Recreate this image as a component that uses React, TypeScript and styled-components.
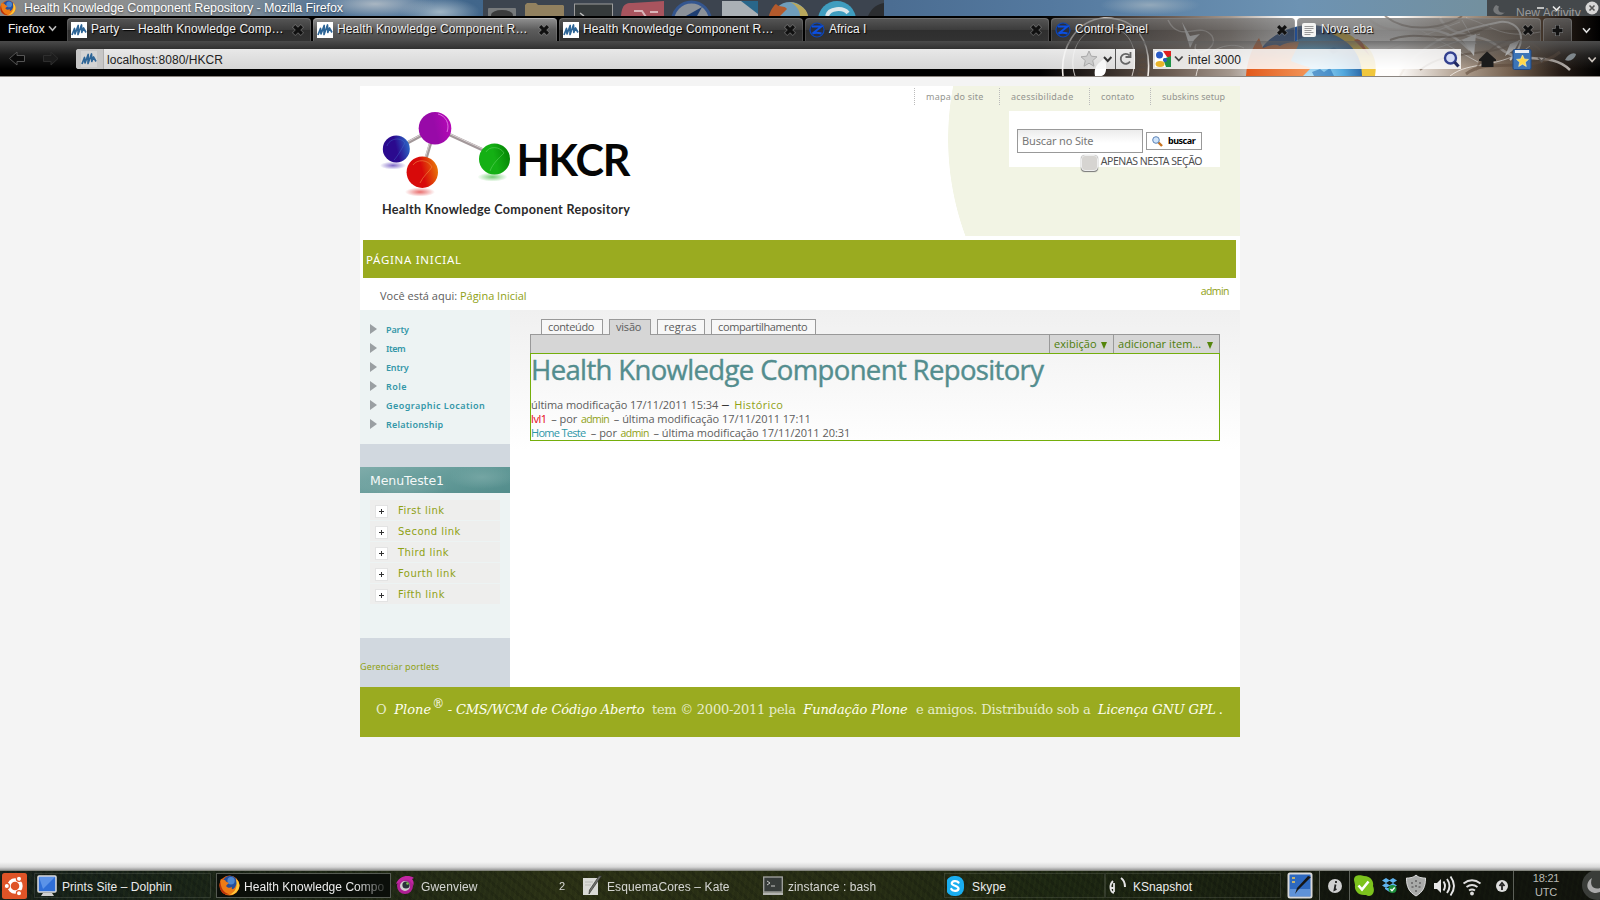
import React from "react";
import styled, { createGlobalStyle, css } from "styled-components";

const ui = css`font-family: "Liberation Sans", Arial, sans-serif;`;
const open = css`font-family: "Open Sans", sans-serif;`;
const noto = css`font-family: "Noto Sans", sans-serif;`;
const deja = css`font-family: "DejaVu Sans", sans-serif;`;
const serif = css`font-family: "DejaVu Serif", serif;`;

const Global = createGlobalStyle`
  * { box-sizing: border-box; }
  body { margin: 0; background: #f4f4f4; overflow: hidden; }
  svg { display: block; }
  a { text-decoration: none; color: inherit; }
`;

const Screen = styled.div`
  width: 1600px;
  height: 900px;
  display: flex;
  flex-direction: column;
  background: #f4f4f4;
`;

/* ---------- window title ---------- */
const TitleBar = styled.header`
  position: relative;
  height: 16px;
  display: flex;
  overflow: hidden;
  background:
    radial-gradient(ellipse 60px 14px at 375px 4px, #a9b6c2 0, transparent 100%),
    radial-gradient(ellipse 40px 14px at 440px 12px, #9fb4c4 0, transparent 100%),
    radial-gradient(ellipse 50px 10px at 1150px 5px, #93a9bb 0, transparent 100%),
    linear-gradient(90deg, #858788 0, #8d8f90 130px, #7f8c96 240px, #4e7296 340px, #55799d 400px, #41668b 470px, #4b6d92 890px, #54799f 1050px, #6d93b3 1300px, #73909f 1480px);
`;
const TitleText = styled.h1`
  ${ui}
  position: relative;
  margin: 0 0 0 8px;
  font-size: 12.5px;
  font-weight: 400;
  line-height: 16px;
  letter-spacing: -0.1px;
  color: #fff;
  text-shadow: 0 1px 2px #0008;
  white-space: nowrap;
`;
const TitleArt = styled.svg`
  position: absolute;
  left: 0;
  top: 0;
`;
const Activity = styled.div`
  ${ui}
  position: absolute;
  right: 0;
  top: 0;
  width: 113px;
  height: 16px;
  overflow: hidden;
  padding: 6px 0 0 29px;
  background: #44484b;
  font-size: 12px;
  line-height: 14px;
  color: #9a9a9a;
  white-space: nowrap;
`;
const WindowButtons = styled.svg`
  position: absolute;
  right: 0;
  top: 0;
`;

/* ---------- browser chrome ---------- */
const Chrome = styled.div`
  position: relative;
  height: 61px;
  background: #000;
  border-bottom: 1px solid #8b8580;
`;
const Persona = styled.svg`
  position: absolute;
  right: 0;
  top: 0;
`;
const TabStrip = styled.nav`
  ${ui}
  position: relative;
  display: flex;
  align-items: flex-end;
  gap: 2px;
  height: 25px;
  font-size: 12px;
  color: #f2f2f2;
`;
const FirefoxMenu = styled.div`
  width: 65px;
  height: 25px;
  padding-left: 8px;
  display: flex;
  align-items: center;
  gap: 3px;
`;
const Tab = styled.div<{ $active?: boolean }>`
  width: 244px;
  height: 23px;
  padding: 0 6px 1px 4px;
  display: flex;
  align-items: center;
  border-radius: 4px 4px 0 0;
  border-top: 1px solid ${p => (p.$active ? "#b5b5b5" : "rgba(150,150,150,.6)")};
  box-shadow: inset 1px 0 rgba(255, 255, 255, 0.12), inset -1px 0 rgba(255, 255, 255, 0.12);
  background: ${p =>
    p.$active
      ? "linear-gradient(#8d8d8d, #5c5c5c 50%, #4c4c4c)"
      : "linear-gradient(rgba(112,112,112,.75), rgba(86,86,86,.7) 48%, rgba(70,70,70,.66) 52%, rgba(78,78,78,.64))"};
`;
const TabLabel = styled.span<{ $ls?: number }>`
  flex: 1;
  margin-left: 4px;
  letter-spacing: ${p => p.$ls ?? 0}px;
  line-height: 21px;
  white-space: nowrap;
  text-shadow: 1px 1px 1px #000;
`;
const NewTab = styled.div`
  width: 29px;
  height: 23px;
  display: grid;
  place-items: center;
  border-radius: 4px 4px 0 0;
  border: 1px solid rgba(150, 150, 150, 0.4);
  border-bottom: 0;
  background: linear-gradient(rgba(112, 112, 112, 0.7), rgba(78, 78, 78, 0.5));
`;
const TabsMenu = styled.div`
  width: 24px;
  height: 25px;
  padding-top: 3px;
  display: grid;
  place-items: center;
`;
const NavBar = styled.div`
  ${ui}
  position: relative;
  height: 35px;
  padding: 8px 0 0 9px;
  display: flex;
  align-items: flex-start;
  font-size: 12px;
  line-height: 20px;
  color: #222;
  background: linear-gradient(rgba(88, 88, 88, 0.85), rgba(70, 70, 70, 0.4) 40%, rgba(0, 0, 0, 0) 80%);
`;
const Arrows = styled.svg`
  margin-right: 15px;
`;
const UrlField = styled.div`
  width: 1059px;
  height: 20px;
  display: flex;
  border-radius: 3px 0 0 3px;
  overflow: hidden;
  background: linear-gradient(rgba(255, 255, 255, 0.89), rgba(248, 248, 248, 0.86));
`;
const SiteBadge = styled.span`
  width: 28px;
  padding-right: 2px;
  display: grid;
  place-items: center;
  background: #c6c6c6;
  border-right: 1px solid #b0b0b0;
`;
const UrlText = styled.span<{ $ls: number }>`
  flex: 1;
  padding: 1px 0 0 3px;
  letter-spacing: ${p => p.$ls}px;
`;
const SearchField = styled.div`
  width: 308px;
  height: 20px;
  margin-left: 18px;
  display: flex;
  background: rgba(255, 255, 255, 0.84);
`;
const ToolIcons = styled.svg``;

/* ---------- page ---------- */
const Viewport = styled.main`
  height: 793px;
  padding-top: 9px;
  background: linear-gradient(transparent 785px, #d9d9d9 790px, #9b9b9b 793px), #f4f4f4;
`;
const Page = styled.div`
  width: 880px;
  margin: 0 auto;
  background: #fff;
`;
const Header = styled.div`
  height: 150px;
  display: flex;
  justify-content: space-between;
  background: radial-gradient(circle at 869px 53px, #f2f4e4 280.5px, #fff 281.2px);
`;
const Logo = styled.svg`
  margin: 14px 0 0 15px;
`;
const HeaderTools = styled.div`
  width: 326px;
  padding-top: 2px;
`;
const SiteActions = styled.div`
  ${noto}
  display: flex;
  font-size: 9px;
  line-height: 17px;
  color: #949590;
`;
const SiteAction = styled.a<{ $w: number; $ls: number }>`
  width: ${p => p.$w}px;
  padding-left: 11px;
  letter-spacing: ${p => p.$ls}px;
  border-left: 1px dotted #bbb;
  white-space: nowrap;
`;
const SearchBox = styled.form`
  width: 211px;
  height: 56px;
  margin: 6px 20px 0 auto;
  padding: 18px 18px 0 8px;
  background: #fff;
`;
const SearchRow = styled.div`
  display: flex;
  align-items: center;
  gap: 3px;
`;
const SearchInput = styled.div`
  ${noto}
  width: 126px;
  height: 24px;
  flex: none;
  padding-left: 4px;
  border: 1px solid #999;
  background: linear-gradient(#ececec, #fff 60%);
  font-size: 11px;
  line-height: 22px;
  letter-spacing: -0.15px;
  color: #777;
`;
const SearchButton = styled.div`
  ${noto}
  width: 56px;
  height: 18px;
  flex: none;
  padding-left: 5px;
  display: flex;
  align-items: center;
  gap: 5px;
  border: 1px solid #999;
  font-size: 9px;
  font-weight: 700;
  line-height: 16px;
  letter-spacing: -0.48px;
  color: #000;
`;
const OnlyHere = styled.label`
  ${noto}
  display: flex;
  justify-content: flex-end;
  gap: 3px;
  font-size: 10.5px;
  line-height: 17px;
  letter-spacing: -0.44px;
  color: #505050;
  white-space: nowrap;
`;
const Check = styled.span`
  width: 17px;
  height: 16px;
  margin-top: 2px;
  border-radius: 4px;
  border: 1px solid #eee;
  background: #d6d4d1;
  box-shadow: 0 1px 1px #777, 0 0 1px #999;
`;
const MainNav = styled.nav`
  ${noto}
  height: 38px;
  margin: 4px 4px 0 3px;
  padding-left: 3px;
  background: #9aab20;
  color: #fff;
  font-size: 11.5px;
  line-height: 39px;
  letter-spacing: 0.7px;
`;
const Crumbs = styled.div`
  ${open}
  height: 32px;
  padding: 0 11px 0 20px;
  display: flex;
  font-size: 11px;
  line-height: 14px;
  color: #5c5c5c;
`;
const CrumbText = styled.span`
  flex: 1;
  padding-top: 11px;
`;
const Green = styled.a<{ $ls?: number; $ml?: number }>`
  color: #8fa114;
  letter-spacing: ${p => p.$ls ?? 0}px;
  margin-left: ${p => p.$ml ?? 0}px;
`;
const UserLink = styled(Green)`
  font-size: 10.5px;
  letter-spacing: -0.55px;
`;
const UserName = styled.span`
  padding-top: 6px;
`;
const Body = styled.div`
  display: flex;
  height: 377px;
`;
const Sidebar = styled.aside`
  width: 150px;
  background: #d1d8df;
`;
const NavPortlet = styled.ul`
  ${noto}
  height: 134px;
  margin: 0 0 23px;
  padding: 10px 0 0 10px;
  list-style: none;
  background: #edf3f3;
  font-size: 9px;
  font-weight: 650;
  line-height: 19px;
  color: #3497a8;
`;
const NavItem = styled.li<{ $ls: number }>`
  display: flex;
  align-items: center;
  gap: 9px;
  height: 19px;
  letter-spacing: ${p => p.$ls}px;
  &::before {
    content: "";
    border: solid transparent;
    border-width: 5.5px 0 5.5px 7.5px;
    border-left-color: #9a9fa2;
    margin-top: -1px;
  }
`;
const MenuTitle = styled.h2`
  ${deja}
  height: 26px;
  margin: 0;
  padding: 1px 0 0 10px;
  background:
    radial-gradient(ellipse 34px 12px at 122px 10px, #74a5a3 0, transparent 100%),
    radial-gradient(ellipse 50px 10px at 40px 20px, #7aa8a6 0, transparent 100%),
    linear-gradient(165deg, #7facaa, #649b99 50%, #528c8b);
  font-size: 12.5px;
  font-weight: 400;
  line-height: 25px;
  letter-spacing: -0.06px;
  color: #f4f8f8;
`;
const MenuBox = styled.div`
  height: 145px;
  padding: 7px 10px 0;
  background: #edf3f3;
`;
const MenuLink = styled.a`
  ${deja}
  display: flex;
  align-items: center;
  height: 20px;
  margin-bottom: 1px;
  padding: 1px 0 0 5px;
  gap: 10px;
  background: #eeeeed;
  font-size: 10px;
  letter-spacing: 0.46px;
  color: #8fa114;
`;
const Plus = styled.span`
  width: 13px;
  height: 13px;
  margin-top: 2px;
  display: grid;
  place-items: center;
  background: #fff;
  border: 1px solid #e3e3e3;
`;
const Manage = styled.a`
  ${noto}
  display: block;
  padding-top: 22px;
  font-size: 9px;
  line-height: 14px;
  letter-spacing: 0.15px;
  color: #8fa114;
`;
const Content = styled.section`
  ${open}
  flex: 1;
  padding: 9px 20px 0;
  background: linear-gradient(#f0f0f0, #fff 140px);
  font-size: 11px;
  color: #5c5c5c;
`;
const ViewTabs = styled.div`
  display: flex;
  gap: 6px;
  height: 15px;
  padding-left: 11px;
`;
const ViewTab = styled.a<{ $w: number; $ls: number; $active?: boolean }>`
  position: relative;
  width: ${p => p.$w}px;
  height: ${p => (p.$active ? 16 : 15)}px;
  padding-left: 6px;
  border: 1px solid #999;
  border-bottom: 0;
  background: ${p => (p.$active ? "#d6d6d6" : "#f7f7f7")};
  line-height: 14px;
  letter-spacing: ${p => p.$ls}px;
`;
const ActionBar = styled.div`
  height: 19px;
  display: flex;
  justify-content: flex-end;
  border: 1px solid #999;
  border-bottom: 0;
  background: #d6d6d6;
`;
const ActionMenu = styled.div<{ $w: number }>`
  width: ${p => p.$w}px;
  display: flex;
  justify-content: space-between;
  align-items: center;
  padding: 0 6px 0 4px;
  border-left: 1px solid #999;
  line-height: 18px;
  letter-spacing: 0.06px;
  color: #4d7d08;
  &::after {
    content: "";
    border: solid transparent;
    border-width: 7px 3.5px 0;
    border-top-color: #55850c;
    margin-top: 2px;
  }
`;
const Editable = styled.div`
  height: 88px;
  border: 1px solid #74ae0b;
`;
const Title = styled.h1`
  margin: 0 0 13px;
  padding-top: 1px;
  font-size: 27.5px;
  font-weight: 400;
  -webkit-text-stroke: 0.4px #538d8e;
  line-height: 30px;
  letter-spacing: -0.64px;
  color: #538d8e;
  white-space: nowrap;
`;
const Meta = styled.div`
  display: flex;
  height: 14px;
  line-height: 14px;
  white-space: nowrap;
`;
const Seg = styled.span<{ $ls?: number; $ml?: number; $c?: string }>`
  letter-spacing: ${p => p.$ls ?? -0.03}px;
  margin-left: ${p => p.$ml ?? 0}px;
  color: ${p => p.$c ?? "inherit"};
`;
const Dash = styled.span`
  font-family: Lato, sans-serif;
  font-size: 10.5px;
  width: 9px;
  margin: 0 4px 0 3px;
  color: #000;
`;
const Footer = styled.footer`
  ${serif}
  height: 50px;
  padding: 9px 0 0 16px;
  display: flex;
  background: #9aab20;
  font-size: 13px;
  line-height: 28px;
  color: #e6ebcb;
  white-space: nowrap;
`;
const Strong = styled.em<{ $ls: number; $ml: number }>`
  color: #fffff2;
  letter-spacing: ${p => p.$ls}px;
  margin-left: ${p => p.$ml}px;
`;
const Sup = styled.sup`
  width: 11px;
  font-size: 12px;
  line-height: 17px;
  margin-left: 1px;
  color: #f6f8e6;
`;

/* ---------- desktop panel ---------- */
const Panel = styled.footer`
  ${ui}
  position: relative;
  height: 30px;
  display: flex;
  align-items: flex-start;
  padding-top: 3px;
  border-top: 1px solid #84867f;
  background:
    repeating-linear-gradient(100deg, rgba(90, 100, 40, 0.07) 0 2px, transparent 2px 5px),
    repeating-linear-gradient(40deg, rgba(0, 0, 0, 0.12) 0 3px, transparent 3px 8px),
    linear-gradient(90deg, #15201a 0, #1b2516 300px, #2a3015 560px, #262c14 850px, #1c2612 1050px, #171d10 1300px, #14180e 1600px);
  color: #ececec;
  font-size: 12px;
`;
const Ubuntu = styled.svg`
  margin: -1px 7px 0 2px;
`;
const Task = styled.div<{ $w: number; $state?: "framed" | "active" | "plain" }>`
  width: ${p => p.$w}px;
  height: 25px;
  margin-top: -1px;
  padding-left: 2px;
  display: flex;
  align-items: center;
  border: 1px solid ${p => (p.$state === "active" ? "#555a52" : p.$state === "framed" ? "#ffffff1c" : "transparent")};
  background: ${p => (p.$state === "active" ? "#0b0f0a" : "transparent")};
  opacity: ${p => (p.$state === "plain" ? 0.88 : 1)};
`;
const TaskLabel = styled.span<{ $ls: number; $fade?: boolean }>`
  flex: 1;
  margin-left: 5px;
  padding-top: 2px;
  letter-spacing: ${p => p.$ls}px;
  line-height: 20px;
  white-space: nowrap;
  ${p => p.$fade && css`
    margin-left: 4px;
    mask-image: linear-gradient(90deg, #000 112px, transparent 146px);
  `}
`;
const Count = styled.span`
  margin-right: 13px;
  font-size: 11px;
`;
const Gap = styled.span<{ $w: number }>`
  width: ${p => p.$w}px;
`;
const Tray = styled.svg`
  position: absolute;
  right: 0;
  top: 0;
`;
const Clock = styled.div`
  position: absolute;
  right: 38px;
  top: 0;
  width: 32px;
  font-size: 11px;
  line-height: 14px;
  text-align: center;
  color: #b9bab5;
  letter-spacing: -0.2px;
`;

/* ---------- icons ---------- */
const Wave = ({ bg = "#fff" }: { bg?: string }) => (
  <svg width="16" height="16" viewBox="0 0 16 16">
    <rect width="16" height="16" fill={bg} />
    <path d="M1 13 L3.500 6.500 L4 12 L7.200 3.500 L7 12.500 L10.500 3 L10.800 10.500 L12.500 6 L15 10.500" fill="none" stroke="#2d6597" strokeWidth="1.700" strokeLinejoin="round" />
  </svg>
);
const Zed = () => (
  <svg width="16" height="16" viewBox="0 0 16 16">
    <circle cx="8" cy="8" r="7" fill="#2a2f3d" stroke="#0c46b8" strokeWidth="1.200" />
    <path d="M3 4.500 H12.500 L3.500 11.500 C6 10.500 9 10.500 12.500 11.500" fill="none" stroke="#0b4fe0" strokeWidth="1.900" />
  </svg>
);
const Doc = () => (
  <svg width="16" height="16" viewBox="0 0 16 16">
    <rect x="1" y="1" width="14" height="14" rx="2" fill="#f4f4f2" />
    <path d="M3.500 4.500h9M3.500 6.500h9M3.500 8.500h7M3.500 10.500h9M3.500 12.500h6" stroke="#999" />
  </svg>
);
const Close = () => (
  <svg width="14" height="14" viewBox="0 0 14 14">
    <path d="M4.300 4.300 L9.700 9.700 M9.700 4.300 L4.300 9.700" stroke="#8a8a8a" strokeWidth="4.800" strokeLinecap="square" opacity=".5" />
    <path d="M4.300 4.300 L9.700 9.700 M9.700 4.300 L4.300 9.700" stroke="#101010" strokeWidth="3.200" strokeLinecap="square" />
  </svg>
);
const Chevron = ({ c = "#ddd" }: { c?: string }) => (
  <svg width="9" height="7" viewBox="0 0 9 7">
    <path d="M1 1.200 L4.500 5.200 L8 1.200" fill="none" stroke={c} strokeWidth="1.600" />
  </svg>
);
const Fox = ({ size = 20 }: { size?: number }) => (
  <svg width={size} height={size} viewBox="0 0 20 20">
    <circle cx="10" cy="10" r="9.500" fill="#e0600f" />
    <circle cx="10.500" cy="7.500" r="6.800" fill="#274f9c" />
    <circle cx="11.500" cy="5.500" r="3.500" fill="#4c86d0" />
    <path d="M2 3.500 C3 5 4.500 4.500 6 5 C6 6.500 8.500 7 9.500 7.500 C8.500 9 6.500 9 7 11 C9 13 11 12 12.500 11.500 C11 15 14.500 14 16 10 C18 8 17 5 16 3.500 C20.500 7 20.500 13 16 17 C12 20 6 20 3 16 C0 12 .5 6 2 3.500Z" fill="#ee7b16" />
    <path d="M16 3.500 C20.500 7 20.500 13 16 17 C14 18.500 12 19 10 19 C16 16 18 11 16 3.500Z" fill="#ffc83a" />
    <path d="M1.500 5.500 C1 11 4 17 10 18.500 C5 19.500 0 16 .5 9Z" fill="#b8320a" />
  </svg>
);
const DesktopArt = () => (
  <TitleArt width="900" height="16" viewBox="0 0 900 16">
    <rect x="483" width="401" height="16" fill="#3c444f" />
    <rect x="488" y="8" width="28" height="10" rx="1" fill="#777a7c" />
    <ellipse cx="502" cy="15" rx="11" ry="5" fill="#3a3b3c" />
    <path d="M525 16V5l2-2h9l2 2h25l1 1v10z" fill="#92815f" />
    <rect x="574.500" y="4" width="38" height="14" fill="#353a3b" stroke="#9c9c9c" />
    <path d="M580 13 l4 3" stroke="#bbb" strokeWidth="1.500" />
    <path d="M621 16 C622 4 626 3 632 3 L664 1 V16Z" fill="#a8545e" />
    <path d="M634 11 h8 l4 6 M650 12 h8" stroke="#d9b4b8" strokeWidth="2" fill="none" />
    <circle cx="691.500" cy="21" r="19" fill="#8b9199" stroke="#34568f" strokeWidth="3" />
    <path d="M686 16 L702 7 L697 16Z" fill="#1f3f73" />
    <path d="M722 16V1h24l12 12v3z" fill="#aab0b5" /><path d="M741 1h17v13z" fill="#29668a" />
    <circle cx="790" cy="20" r="18" fill="#6f9dbb" />
    <path d="M790 2 C803 4 808 12 808 16 H800 C800 10 796 5 790 2Z" fill="#b9a85c" />
    <path d="M769 16 C770 11 774 5 776 4 C780 8 784 5 787 9 L780 16Z" fill="#b45a2c" />
    <circle cx="837" cy="20" r="19" fill="#3f9dbf" /><path d="M827 16 C829 8 843 7 848 13" stroke="#dbe6ea" strokeWidth="4" fill="none" />
    <path d="M868 16 C872 7 878 4 884 3 V16Z" fill="#2b2d30" />
  </TitleArt>
);
const PersonaArt = () => (
  <Persona width="560" height="60" viewBox="1040 16 560 60">
    <defs>
      <linearGradient id="base" x1="0" x2="1">
        <stop offset="0" stopColor="#000" /><stop offset=".1" stopColor="#2c2521" />
        <stop offset=".24" stopColor="#6f6056" /><stop offset=".34" stopColor="#a5988e" />
        <stop offset=".44" stopColor="#fff" /><stop offset=".64" stopColor="#fffdfb" />
        <stop offset=".74" stopColor="#b7a798" /><stop offset=".84" stopColor="#75614f" />
        <stop offset=".93" stopColor="#241b15" /><stop offset="1" stopColor="#000" />
      </linearGradient>
      <radialGradient id="globe" cx=".5" cy=".45"><stop offset="0" stopColor="#bfe8fb" /><stop offset=".55" stopColor="#53a9de" /><stop offset="1" stopColor="#1b4a8c" /></radialGradient>
      <linearGradient id="foxfur" x1="0" x2="1"><stop offset="0" stopColor="#e2591b" /><stop offset="1" stopColor="#f2975a" /></linearGradient>
    </defs>
    <rect x="1040" y="16" width="560" height="60" fill="url(#base)" />
    <g fill="none" stroke="#f3eee9">
      <path d="M1063 76 C1060 50 1075 20 1104 18 C1135 17 1152 40 1148 76" strokeWidth="1.600" />
      <path d="M1075 76 C1068 55 1078 30 1102 27 C1130 25 1140 50 1132 76" strokeWidth="1" opacity=".8" />
      <path d="M1168 20 C1180 45 1200 20 1212 36 C1220 50 1190 60 1196 44" strokeWidth="1.400" opacity=".7" />
      <path d="M1196 76 C1200 50 1230 40 1244 48" opacity=".8" />
      <path d="M1370 20 C1400 45 1430 10 1470 50" strokeWidth="2.500" />
      <path d="M1400 76 C1420 40 1460 30 1500 22 C1520 20 1530 40 1510 60" strokeWidth="2" />
      <path d="M1440 18 C1450 40 1480 30 1500 48 C1520 66 1550 50 1570 70" strokeWidth="2.500" opacity=".7" />
      <path d="M1466 18 C1490 24 1500 40 1540 32" opacity=".6" />
      <path d="M1385 50 L1460 22 M1400 60 L1480 34 M1420 30 L1478 62 M1450 76 C1470 60 1500 70 1530 46 M1462 20 L1476 44" opacity=".8" />
    </g>
    <g fill="none" stroke="#5d4838" opacity=".55" strokeWidth="2">
      <path d="M1385 16 C1410 36 1450 26 1462 16" /><path d="M1420 70 C1450 46 1490 60 1520 40" />
      <path d="M1390 40 C1420 28 1446 48 1490 26 M1476 70 C1490 40 1520 30 1540 50" />
      <path d="M1466 74 C1490 56 1530 76 1560 52" strokeWidth="3" /><path d="M1140 76 C1148 60 1134 50 1144 42" strokeWidth="6" strokeDasharray="3 2" />
    </g>
    <path d="M1095 76 C1093 66 1100 62 1105 58 C1107 68 1107 76 1100 76Z M1182 22 l8 14 l10 -2 l-6 6 l-4 8 l-3-10Z M1462 40 l12 16 l2-22Z M1505 56 l5-12 l10-4 l-5 9Z" fill="#fff" />
    <circle cx="1310" cy="87" r="62" fill="url(#globe)" />
    <path d="M1262 48 C1280 22 1330 18 1352 40 C1330 30 1300 34 1290 46Z" fill="#224c8e" />
    <path d="M1246 76 C1247 60 1253 46 1259 38 L1263 48 C1272 44 1276 44 1280 46 C1286 42 1294 42 1299 42 C1297 50 1292 56 1291 61 C1298 64 1306 66 1311 68 L1303 76Z" fill="url(#foxfur)" />
    <path d="M1332 34 C1352 42 1362 56 1362 76 H1375 C1378 62 1373 46 1356 40 C1352 34 1340 30 1332 34Z" fill="#f0c63c" />
    <path d="M1354 40 C1358 38 1362 41 1364 46 L1370 56Z" fill="#cd4e1c" />
    <path d="M1312 72 l8-3 4 3 6-4 4 8h-20z M1328 50 l6-3 5 4 -6 3z" fill="#2a6fb4" opacity=".6" />
  </Persona>
);
const LogoArt = () => (
  <Logo width="265" height="125" viewBox="375 100 265 125">
    <defs>
      {[["p", "#980aa8", "#b808b8"], ["b", "#2b0a8e", "#2c6ac8"], ["r", "#d80a0a", "#ea7a08"], ["g", "#14b014", "#048504"]].map(([id, a, b]) => (
        <linearGradient key={id} id={"ball" + id} x1="0" y1=".6" x2="1" y2=".35">
          <stop offset="0" stopColor={a} /><stop offset=".5" stopColor={a} /><stop offset="1" stopColor={b} />
        </linearGradient>
      ))}
      {[["b", "#4a2ab0"], ["r", "#e03030"], ["g", "#3cb83c"]].map(([id, c]) => (
        <radialGradient key={id} id={"shade" + id}><stop offset="0" stopColor={c} stopOpacity=".7" /><stop offset="1" stopColor={c} stopOpacity="0" /></radialGradient>
      ))}
    </defs>
    <g stroke="#a2989a" strokeWidth="3.200"><path d="M435 128 L396 149 M435 128 L422 172 M435 128 L494 155" /></g>
    <g stroke="#d9d2d3" strokeWidth="1"><path d="M435 127 L396 148 M434 128 L421 172 M435 127 L494 154" /></g>
    <ellipse cx="393" cy="165.500" rx="13" ry="4" fill="url(#shadeb)" />
    <ellipse cx="420" cy="192" rx="15" ry="4.500" fill="url(#shader)" />
    <ellipse cx="492.500" cy="177" rx="15" ry="4.500" fill="url(#shadeg)" />
    <circle cx="396.300" cy="149" r="13.500" fill="url(#ballb)" />
    <circle cx="435" cy="128.300" r="16.300" fill="url(#ballp)" />
    <circle cx="422.300" cy="172.200" r="15.700" fill="url(#ballr)" />
    <circle cx="494.500" cy="159" r="15.500" fill="url(#ballg)" />
    <path d="M387 146 C389 139 400 136 405 143 C401 150 397 157 394 160" fill="none" stroke="#4470d0" opacity=".4" />
    <path d="M438 114 C446 116 450 124 447 132" fill="none" stroke="#e58ae8" opacity=".8" />
    <path d="M413 165 C417 159 428 159 432 167 C429 172 423 176 420 183" fill="none" stroke="#f5a050" opacity=".5" />
    <path d="M486 152 C489 146 500 146 504 153 C499 158 493 163 490 171" fill="none" stroke="#7fe07f" opacity=".4" />
    <text x="516.500" y="175.700" fontFamily="Lato, sans-serif" fontWeight="700" fontSize="43" textLength="114" fill="#050505">HKCR</text>
    <text x="382" y="213.500" fontFamily="Lato, sans-serif" fontWeight="700" fontSize="12.600" textLength="248" fill="#2a2a2a">Health Knowledge Component Repository</text>
  </Logo>
);

const tabs = [
  { icon: <Wave />, label: "Party — Health Knowledge Comp…", ls: 0.04 },
  { icon: <Wave />, label: "Health Knowledge Component R…", ls: 0.13, active: true },
  { icon: <Wave />, label: "Health Knowledge Component R…", ls: 0.13 },
  { icon: <Zed />, label: "Africa I", ls: 0 },
  { icon: <Zed />, label: "Control Panel", ls: 0.02 },
  { icon: <Doc />, label: "Nova aba", ls: 0.09 },
];
const navItems: [string, number][] = [["Party", -0.1], ["Item", -0.4], ["Entry", -0.15], ["Role", 0.45], ["Geographic Location", 0.46], ["Relationship", 0.22]];

export default function App() {
  return (
    <Screen>
      <Global />
      <TitleBar>
        <DesktopArt />
        <Fox size={16} />
        <TitleText>Health Knowledge Component Repository - Mozilla Firefox</TitleText>
        <Activity>New Activity</Activity>
        <WindowButtons width="113" height="16" viewBox="1487 0 113 16">
          <path d="M1496 5 c-6 5 -1 11 6 9.500 l3-2 c-5 1 -8 -2 -6-6" fill="#77797b" />
          <path d="M1537 8h7M1553 6.500l3.500 3.500 3.500-3.500" stroke="#e8e8e8" strokeWidth="1.600" fill="none" />
          <circle cx="1592" cy="8" r="6.500" fill="#d6d6d6" /><path d="M1589.500 5.500l5 5m0-5l-5 5" stroke="#555" strokeWidth="1.600" />
        </WindowButtons>
      </TitleBar>

      <Chrome>
        <PersonaArt />
        <TabStrip>
          <FirefoxMenu>Firefox <Chevron c="#bbb" /></FirefoxMenu>
          {tabs.map((t, i) => (
            <Tab key={i} $active={t.active}>
              {t.icon}
              <TabLabel $ls={t.ls}>{t.label}</TabLabel>
              <Close />
            </Tab>
          ))}
          <NewTab>
            <svg width="13" height="13" viewBox="0 0 13 13"><path d="M6.500 1v11M1 6.500h11" stroke="#777" strokeWidth="5" /><path d="M6.500 1.500v10M1.500 6.500h10" stroke="#111" strokeWidth="3.500" /></svg>
          </NewTab>
          <TabsMenu><Chevron /></TabsMenu>
        </TabStrip>
        <NavBar>
          <Arrows width="52" height="20" viewBox="9 49 52 20">
            <path d="M9.500 58.500 L17 52 V55.500 H24.500 V61.500 H17 V65Z" fill="#0a0a0a" stroke="#555" />
            <path d="M58 58.500 L51 52 V55.500 H43.500 V61.500 H51 V65Z" fill="#1c1c1c" stroke="#2e2e2e" />
          </Arrows>
          <UrlField>
            <SiteBadge><Wave bg="#d4d4d4" /></SiteBadge>
            <UrlText $ls={0.07}>localhost:8080/HKCR</UrlText>
            <svg width="57" height="20" viewBox="1078 49 57 20">
              <path d="M1089 51l2.300 5.200 5.700.6-4.300 3.800 1.300 5.600-5-3-5 3 1.300-5.600-4.300-3.800 5.700-.6z" fill="#ccc" stroke="#aaa" />
              <path d="M1104 57l3.700 4 3.700-4" fill="none" stroke="#333" strokeWidth="2" />
              <path d="M1115.500 49v20" stroke="#555" />
              <path d="M1129.500 55.500a5 5 0 1 0 .5 6M1130.500 52v5h-5" fill="none" stroke="#666" strokeWidth="1.800" />
            </svg>
          </UrlField>
          <SearchField>
            <svg width="32" height="20" viewBox="1153 49 32 20">
              <rect x="1155" y="51" width="16" height="16" fill="#fff" />
              <path d="M1163 51h8v7l-4-1z" fill="#d22" /><path d="M1163 59l8-3v11h-5z" fill="#1f9147" />
              <circle cx="1159.500" cy="55" r="3.500" fill="#2a5bc7" /><ellipse cx="1160" cy="64" rx="4.500" ry="3" fill="#e9b42a" />
              <circle cx="1165" cy="60" r="2" fill="#2a5bc7" />
              <path d="M1175 56.500l3.800 4 3.800-4" fill="none" stroke="#444" strokeWidth="1.800" />
            </svg>
            <UrlText $ls={0.11}>intel 3000</UrlText>
            <svg width="20" height="20" viewBox="1441 49 20 20">
              <circle cx="1450.500" cy="58" r="5.500" fill="#d5dcf5" stroke="#33408f" strokeWidth="2.400" /><path d="M1454.500 62l4 4.500" stroke="#222a60" strokeWidth="3.200" />
            </svg>
          </SearchField>
          <ToolIcons width="139" height="24" viewBox="1461 49 139 24">
            <path d="M1479 59.500 L1487 51.500 L1496 59.500 V61 H1493.500 V67 H1481.500 V61 H1479Z" fill="#1b1b1b" />
            <rect x="1513" y="49.500" width="18" height="20" rx="1.500" fill="#3c75b8" stroke="#1f4680" /><rect x="1515" y="50" width="14" height="3" fill="#e8eef5" />
            <path d="M1522.500 55l1.800 4 4.200.4-3.200 2.800 1 4.300-3.800-2.300-3.800 2.300 1-4.300-3.200-2.800 4.200-.4z" fill="#ffd84a" stroke="#fff3b0" strokeWidth=".6" />
            <path d="M1538 57.500l3.600 4 3.600-4" fill="none" stroke="#5a5450" strokeWidth="1.700" />
            <path d="M1588.500 57.500l3.600 4 3.600-4" fill="none" stroke="#c9c2bc" strokeWidth="1.700" />
            <path d="M1565 60 C1568 54 1573 52 1576 54 C1575 59 1570 62 1565 60Z" fill="#7e868b" />
          </ToolIcons>
        </NavBar>
      </Chrome>

      <Viewport>
        <Page>
          <Header>
            <LogoArt />
            <HeaderTools>
              <SiteActions>
                <SiteAction $w={85} $ls={0.25}>mapa do site</SiteAction>
                <SiteAction $w={90} $ls={0.24}>acessibilidade</SiteAction>
                <SiteAction $w={61} $ls={0.15}>contato</SiteAction>
                <SiteAction $w={90} $ls={0.02}>subskins setup</SiteAction>
              </SiteActions>
              <SearchBox>
                <SearchRow>
                  <SearchInput>Buscar no Site</SearchInput>
                  <SearchButton>
                    <svg width="11" height="11" viewBox="0 0 11 11"><path d="M6 6l4 4" stroke="#c8721e" strokeWidth="2.400" /><circle cx="4" cy="4" r="3.300" fill="#cfe4fb" stroke="#5b82b5" /></svg>
                    buscar
                  </SearchButton>
                </SearchRow>
                <OnlyHere><Check />APENAS NESTA SEÇÃO</OnlyHere>
              </SearchBox>
            </HeaderTools>
          </Header>
          <MainNav>PÁGINA INICIAL</MainNav>
          <Crumbs>
            <CrumbText>Você está aqui: <Green>Página Inicial</Green></CrumbText>
            <UserName><UserLink>admin</UserLink></UserName>
          </Crumbs>
          <Body>
            <Sidebar>
              <NavPortlet>
                {navItems.map(([t, ls]) => <NavItem key={t} $ls={ls}>{t}</NavItem>)}
              </NavPortlet>
              <MenuTitle>MenuTeste1</MenuTitle>
              <MenuBox>
                {["First", "Second", "Third", "Fourth", "Fifth"].map(n => (
                  <MenuLink key={n}>
                    <Plus><svg width="5" height="5"><path d="M2.500 0v5M0 2.500h5" stroke="#333" /></svg></Plus>
                    {n} link
                  </MenuLink>
                ))}
              </MenuBox>
              <Manage>Gerenciar portlets</Manage>
            </Sidebar>
            <Content>
              <ViewTabs>
                <ViewTab $w={62} $ls={-0.34}>conteúdo</ViewTab>
                <ViewTab $w={42} $ls={-0.2} $active>visão</ViewTab>
                <ViewTab $w={48} $ls={0}>regras</ViewTab>
                <ViewTab $w={105} $ls={-0.38}>compartilhamento</ViewTab>
              </ViewTabs>
              <ActionBar>
                <ActionMenu $w={64}>exibição</ActionMenu>
                <ActionMenu $w={106}>adicionar item…</ActionMenu>
              </ActionBar>
              <Editable>
                <Title>Health Knowledge Component Repository</Title>
                <Meta>
                  <Seg $ls={-0.07}>última modificação 17/11/2011 15:34</Seg>
                  <Dash>—</Dash>
                  <Green $ls={0.36}>Histórico</Green>
                </Meta>
                <Meta>
                  <Seg $ls={-0.4} $c="#e60012">lvl1</Seg>
                  <Seg $ml={4.5}>– por</Seg>
                  <UserLink $ml={3.6}>admin</UserLink>
                  <Seg $ml={4.6}>– última modificação 17/11/2011 17:11</Seg>
                </Meta>
                <Meta>
                  <Seg $ls={-0.7} $c="#2f97a8">Home Teste</Seg>
                  <Seg $ml={5.3}>– por</Seg>
                  <UserLink $ml={3.6}>admin</UserLink>
                  <Seg $ml={4.6}>– última modificação 17/11/2011 20:31</Seg>
                </Meta>
              </Editable>
            </Content>
          </Body>
          <Footer>
            O
            <Strong $ls={0.05} $ml={7.5}>Plone</Strong><Sup>®</Sup>
            <Strong $ls={-0.17} $ml={4.5}>- CMS/WCM de Código Aberto</Strong>
            <Seg $ls={-0.27} $ml={7.5}>tem © 2000-2011 pela</Seg>
            <Strong $ls={-0.09} $ml={7.5}>Fundação Plone</Strong>
            <Seg $ls={-0.2} $ml={8.5}>e amigos. Distribuído sob a</Seg>
            <Strong $ls={-0.14} $ml={7.5}>Licença GNU GPL</Strong>
            <Seg $ml={3} $c="#fffff2">.</Seg>
          </Footer>
        </Page>
      </Viewport>

      <Panel>
        <Ubuntu width="25" height="26" viewBox="0 0 25 26">
          <rect width="25" height="26" rx="2.500" fill="#df5427" />
          <circle cx="13" cy="13" r="6" fill="none" stroke="#fff" strokeWidth="3.400" />
          <g fill="#fff" stroke="#df5427" strokeWidth="1.200"><circle cx="4.800" cy="13" r="2.600" /><circle cx="17" cy="5.800" r="2.600" /><circle cx="17" cy="20.200" r="2.600" /></g>
        </Ubuntu>
        <Task $w={177} $state="framed">
          <svg width="20" height="22" viewBox="0 0 20 22"><rect x="1" y="1" width="18" height="16" rx="1" fill="#2f6fd8" stroke="#dedede" strokeWidth="1.500" /><path d="M2 2h16L6 14z" fill="#6ea3f0" opacity=".7" /><path d="M6 18h9l2 3H4z" fill="#cfcfcf" /></svg>
          <TaskLabel $ls={0.06}>Prints Site – Dolphin</TaskLabel>
        </Task>
        <Gap $w={5} />
        <Task $w={175} $state="active">
          <Fox size={21} /><TaskLabel $ls={0.04} $fade>Health Knowledge Compo</TaskLabel>
        </Task>
        <Gap $w={2} />
        <Task $w={186} $state="plain">
          <svg width="20" height="22" viewBox="0 0 20 22"><circle cx="9" cy="11" r="6.500" fill="#ece6ec" stroke="#c41fa6" strokeWidth="3" /><circle cx="10" cy="10" r="3.600" fill="#2a3340" /><circle cx="11.500" cy="8.500" r="1.300" fill="#8dd15c" /><path d="M0 9 C3 1 12 -1 18 3 L16 4 C18 6 18 9 17 11 C16 6 12 4 8 5Z" fill="#d927b8" /></svg>
          <TaskLabel $ls={0.16}>Gwenview</TaskLabel>
          <Count>2</Count>
        </Task>
        <Task $w={181} $state="plain">
          <svg width="20" height="22" viewBox="0 0 20 22"><rect x="1" y="3" width="15" height="17" fill="#f2f2f2" /><path d="M3 7h8M3 10h6" stroke="#ccc" /><path d="M19.500 1 L9 16 L7 19 L7.500 15 L17 1Z" fill="#7b7b7b" stroke="#333" strokeWidth=".7" /></svg>
          <TaskLabel $ls={0.1}>EsquemaCores – Kate</TaskLabel>
        </Task>
        <Task $w={184} $state="plain">
          <svg width="20" height="22" viewBox="0 0 20 22"><rect x=".7" y="2" width="18.600" height="15" fill="#3a3f40" stroke="#b5b5b5" strokeWidth="1.300" /><path d="M4 6l3 2-3 2M8 11h4" stroke="#ddd" fill="none" /><rect y="17.500" width="20" height="2.500" fill="#c8c8c8" /></svg>
          <TaskLabel $ls={0.09}>zinstance : bash</TaskLabel>
        </Task>
        <Task $w={161} $state="framed">
          <svg width="20" height="22" viewBox="2 0 20 22"><rect x="1" y="1" width="18" height="20" rx="8" fill="#1aaef0" /><path d="M13.500 7.500 C12 5.500 6.500 5.500 6.800 8.500 C7 11 13.500 10.500 13.500 13.500 C13.500 16.500 7.500 16.500 6.300 14" fill="none" stroke="#fff" strokeWidth="2.300" strokeLinecap="round" /></svg>
          <TaskLabel $ls={0.16}>Skype</TaskLabel>
        </Task>
        <Task $w={176} $state="framed">
          <svg width="20" height="22" viewBox="0 0 20 22"><path d="M5 6 C1 10 2 17 6 18 M6 8 v9 M3 13h3" stroke="#e4e4e4" strokeWidth="1.800" fill="none" /><path d="M13 3 C16 5 17 8 17 12" stroke="#e4e4e4" strokeWidth="2" fill="none" /></svg>
          <TaskLabel $ls={0.04}>KSnapshot</TaskLabel>
        </Task>
        <Tray width="320" height="29" viewBox="1280 871 320 29">
          <rect x="1319" y="871" width="281" height="29" fill="#0e110c" opacity=".55" />
          <path d="M1319.500 871v29M1349.500 871v29M1513.500 871v29" stroke="#5c6058" />
          <rect x="1288.500" y="873.500" width="23" height="24" rx="1.500" fill="#2d68bf" stroke="#d9d9d9" strokeWidth="2" /><path d="M1290 889h20v7h-20z" fill="#5f92d8" /><path d="M1311 877 L1298 890 L1295 894 L1297 888 L1308 876Z" fill="#161616" /><path d="M1292 878h3M1292 882h3" stroke="#f0c95a" strokeWidth="1.500" />
          <circle cx="1335" cy="886" r="7" fill="#cfcfcf" /><path d="M1336 881v2M1335.500 884.500l-1 5.500 2-1" stroke="#222" strokeWidth="1.800" fill="none" />
          <path d="M1354 880 C1354 874 1361 875 1364 876 C1371 876 1374 882 1373 886 C1376 893 1371 898 1366 895 C1358 896 1354 890 1355 885Z" fill="#7cc31d" /><path d="M1358.500 885.500l3.500 4 6.500-8" fill="none" stroke="#fff" strokeWidth="2.600" />
          <path d="M1386 878l4 2.500-4 2.500-4-2.500zM1393 878l4 2.500-4 2.500-4-2.500zM1386 883l4 2.500-4 2.500-4-2.500zM1393 883l4 2.500-4 2.500-4-2.500zM1385 889l4.500 3 4.500-3v-1h-9z" fill="#5fb2ee" /><circle cx="1392.500" cy="889" r="4" fill="#1d8f3c" /><path d="M1390.500 889l1.500 1.700 2.700-3.200" stroke="#fff" strokeWidth="1.300" fill="none" />
          <path d="M1416 875 C1419 878 1423 878 1425.500 878 C1425.500 887 1423 892 1416 896 C1409 892 1406.500 887 1406.500 878 C1409 878 1413 878 1416 875Z" fill="#a9aba9" stroke="#dcdcdc" /><path d="M1416 880v2M1416 885v2M1416 890v2M1411 883h2M1419 883h2M1411.500 887h2M1418.500 887h2" stroke="#666" strokeWidth="1.600" />
          <path d="M1434 883h3l4-4v14l-4-4h-3z" fill="#e6e6e6" /><path d="M1443.500 881.500q3 4.500 0 9M1447 879q5 7 0 14M1450.500 876.500q7 9.500 0 19" stroke="#e6e6e6" strokeWidth="1.900" fill="none" />
          <path d="M1463.500 883.500q8.500-6.500 17 0M1466.500 887q5.500-4 11 0M1469 890.500q3-2 6 0" stroke="#dedede" strokeWidth="1.900" fill="none" /><circle cx="1472" cy="893.500" r="1.900" fill="#dedede" />
          <circle cx="1502" cy="886" r="6" fill="#ddd" /><path d="M1502 890v-5M1499.500 886l2.500-3 2.500 3" stroke="#222" strokeWidth="1.800" fill="none" />
          <circle cx="1597" cy="885" r="15" fill="#3a3d39" /><path d="M1592 878 C1584 883 1587 893 1596 893 L1600 892 V888 C1594 890 1589 886 1592 878Z" fill="#aaa" />
        </Tray>
        <Clock>18:21<br />UTC</Clock>
      </Panel>
    </Screen>
  );
}
